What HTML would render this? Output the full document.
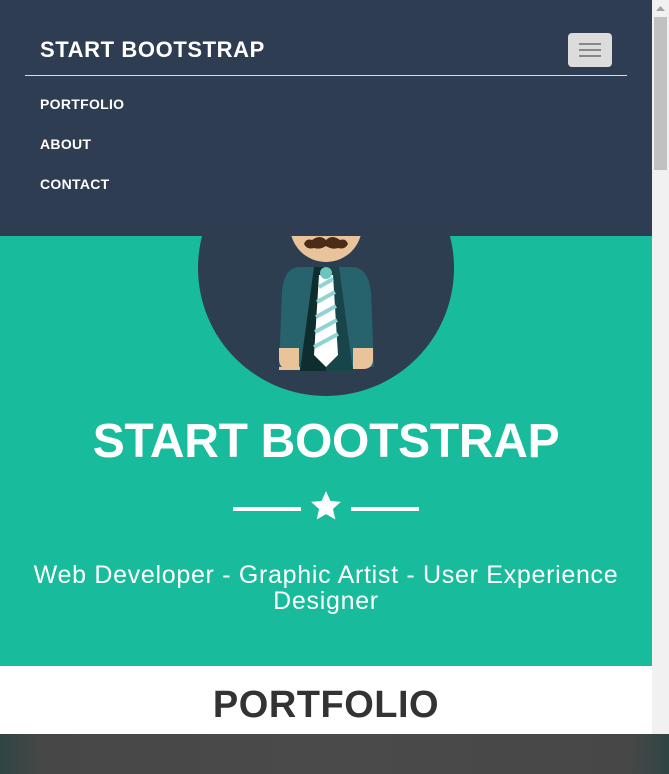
<!DOCTYPE html>
<html><head><style>
*{margin:0;padding:0;box-sizing:border-box}
body{width:669px;height:774px;overflow:hidden;position:relative;font-family:"Liberation Sans",sans-serif;background:#fff}
.hero{position:absolute;left:0;top:0;width:652px;height:666px;background:#18bc9c;overflow:hidden}
.circle{position:absolute;left:198px;top:140px;width:256px;height:256px;border-radius:50%;background:#2c3e50;overflow:hidden}
nav{position:absolute;left:0;top:0;width:652px;height:236px;background:#2e3d51}
.brand{position:absolute;left:40px;top:37px;color:#fff;font-weight:bold;font-size:22px;letter-spacing:0.6px}
.tog{position:absolute;left:568px;top:33px;width:44px;height:34px;background:#dcdcdc;border-radius:4px}
.tog i{position:absolute;left:11px;width:22px;height:2px;background:#888}
.line{position:absolute;left:25px;top:75px;width:602px;height:1px;background:#ddd}
.nl{position:absolute;left:40px;color:#fff;font-size:14px;font-weight:bold;letter-spacing:0.3px}
h1{position:absolute;left:0;width:652px;top:414px;text-align:center;color:#fff;font-size:48px;font-weight:bold;letter-spacing:-0.3px}
.sub{position:absolute;left:0;width:652px;top:562px;text-align:center;color:#fff;font-size:25px;line-height:26px;letter-spacing:0.7px}
.bar{position:absolute;top:507px;height:4px;width:68px;background:#fff}
.pf{position:absolute;left:0;top:684px;width:652px;text-align:center;font-size:38px;font-weight:bold;color:#333;letter-spacing:0.5px}
.bot{position:absolute;left:0;top:734px;width:669px;height:40px;background:linear-gradient(90deg,#2f4444 0,#474747 40px,#4a4a4a 50%,#474747 629px,#2f4444 100%)}
.sb{position:absolute;left:652px;top:0;width:17px;height:734px;background:#f1f1f1}
.th{position:absolute;left:654px;top:17px;width:13px;height:153px;background:#c1c1c1}
</style></head><body>
<div class="hero">
<div class="circle">
<svg width="256" height="256" viewBox="198 140 256 256" style="position:absolute;left:0;top:0">
<ellipse cx="326" cy="226" rx="36" ry="36" fill="#e9c39a"/>
<path d="M304 244 q2 -6 8 -4 q8 -6 14 0 q6 -6 14 0 q6 -2 8 4 q-3 6 -10 4 q-6 2 -12 -2 q-6 4 -12 2 q-7 2 -10 -4z" fill="#4a2c17"/>
<path d="M300 267 h52 q16 0 19 25 l3 75 h-95 l3 -75 q2 -25 18 -25z" fill="#27636c"/>
<path d="M279 367 h21 v2 h-21z M279 367 h21 v2 q0 0 0 0z" fill="#e9c39a"/>
<path d="M279 367 h21 v3 h-21z" fill="#e9c39a"/>
<path d="M279 367 h20 v2 h-20z" fill="#e9c39a"/>
<path d="M314 267 h12 v104 h-26z" fill="#0e2d2f"/>
<path d="M326 267 h13 l14 104 h-27z" fill="#174549"/>
<path d="M319 275 h14 l5 80 l-12 12 l-12 -12z" fill="#fff"/>
<path d="M319 287 l14 -8 M317 302 l18 -10 M316 317 l20 -11 M315 332 l22 -12 M314 347 l24 -13" stroke="#8fd3d3" stroke-width="4"/>
<circle cx="326" cy="273" r="6" fill="#6cc4bd"/>
<path d="M279 348 h20 v21 h-10 q-10 0 -10 -10z" fill="#e9c39a"/>
<path d="M353 348 h20 v11 q0 10 -10 10 h-10z" fill="#e9c39a"/>
</svg>
</div>
<h1>START BOOTSTRAP</h1>
<div class="bar" style="left:233px"></div>
<div class="bar" style="left:351px"></div>
<svg style="position:absolute;left:309px;top:489px" width="34" height="34" viewBox="0 0 24 24"><path d="M12 1.5l3.1 6.9 7.4.7-5.6 5 1.7 7.4L12 17.7l-6.6 3.8 1.7-7.4-5.6-5 7.4-.7z" fill="#fff"/></svg>
<div class="sub">Web Developer - Graphic Artist - User Experience<br>Designer</div>
</div>
<nav>
<div class="brand">START BOOTSTRAP</div>
<div class="tog"><i style="top:10px"></i><i style="top:16px"></i><i style="top:22px"></i></div>
<div class="line"></div>
<div class="nl" style="top:96px">PORTFOLIO</div>
<div class="nl" style="top:136px">ABOUT</div>
<div class="nl" style="top:176px">CONTACT</div>
</nav>
<div class="pf">PORTFOLIO</div>
<div class="sb"></div><div class="th"></div>
<svg style="position:absolute;left:655px;top:5px" width="11" height="7"><path d="M1 6h9L5.5 1z" fill="#a3a3a3"/></svg>
<div class="bot"></div>
</body></html>
